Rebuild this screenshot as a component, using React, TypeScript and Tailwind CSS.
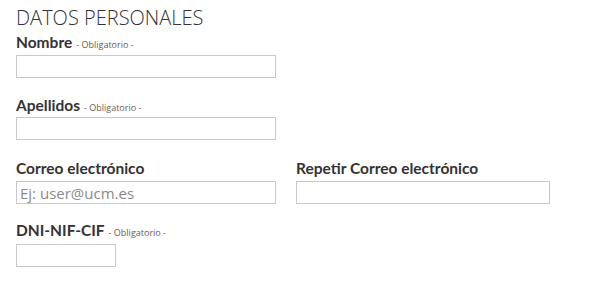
const inputCls =
  "block h-[23px] border border-[#c8c8c8] bg-white px-[3px] text-[15px] text-[#555] outline-none placeholder:text-[#8a8a8a] [font-family:'Open_Sans',sans-serif]";

function Label({ text, required }: { text: string; required?: boolean }) {
  return (
    <label className="flex h-[18px] items-baseline gap-[4px] leading-[18px] [font-family:Lato,sans-serif]">
      <span className="text-[15.5px] font-bold text-[#333]">{text}</span>
      {required && (
        <span className="text-[9px] leading-[18px] text-[#6b5d52] [font-family:'Open_Sans',sans-serif]">
          - Obligatorio -
        </span>
      )}
    </label>
  );
}

export default function App() {
  return (
    <div className="min-h-[284px] w-[591px] bg-white px-4 pt-[5px]">
      <h2 className="h-[26px] text-[20px] font-light leading-[26px] text-[#333] [font-family:'Open_Sans',sans-serif]">
        DATOS PERSONALES
      </h2>

      <div className="mt-[2px]">
        <Label text="Nombre" required />
        <input className={`${inputCls} mt-[4px] w-[260px]`} />
      </div>

      <div className="mt-[18px]">
        <Label text="Apellidos" required />
        <input className={`${inputCls} mt-[3px] w-[260px]`} />
      </div>

      <div className="mt-[19px] flex gap-[20px]">
        <div>
          <Label text="Correo electrónico" />
          <input className={`${inputCls} mt-[4px] w-[260px]`} placeholder="Ej: user@ucm.es" />
        </div>
        <div>
          <Label text="Repetir Correo electrónico" />
          <input className={`${inputCls} mt-[4px] w-[254px]`} />
        </div>
      </div>

      <div className="mt-[17px]">
        <Label text="DNI-NIF-CIF" required />
        <input className={`${inputCls} mt-[5px] w-[100px]`} />
      </div>
    </div>
  );
}
